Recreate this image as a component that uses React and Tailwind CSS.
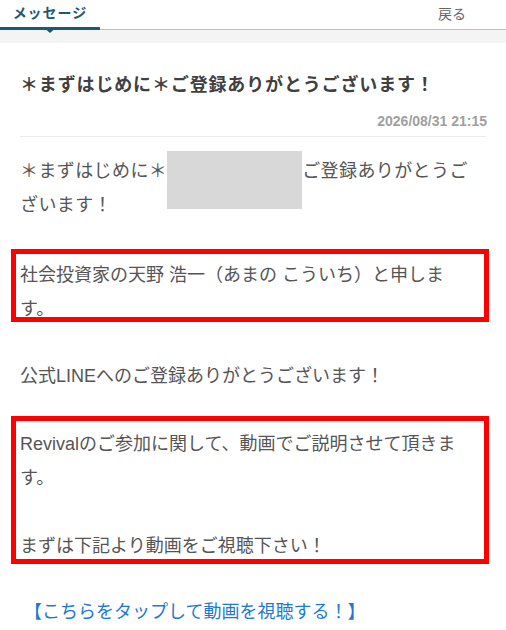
import React from 'react';

const FONT = "font-['Liberation_Sans','Noto_Sans_CJK_JP',sans-serif]";

export default function App() {
  return (
    <div className={`w-[506px] h-[630px] overflow-hidden bg-white ${FONT}`}>
      {/* Tabs */}
      <div className="flex h-[30px]">
        <div className="relative w-[100px] border-b-[3px] border-[#1b5a72] flex items-center justify-center">
          <span className="text-[14px] font-bold text-[#1b5a72] tracking-[1px]">メッセージ</span>
          <span className="absolute left-[43px] top-[27px] w-0 h-0 border-l-[7px] border-r-[7px] border-t-[6px] border-l-transparent border-r-transparent border-t-[#1b5a72]"></span>
        </div>
        <div className="flex-1 border-b border-[#bdbdbd] flex items-center justify-end pr-[40px]">
          <span className="text-[14px] text-[#666]">戻る</span>
        </div>
      </div>
      <div className="h-[13px] bg-[#f4f4f4]"></div>

      {/* Message */}
      <div className="px-[20px]">
        <h1 className="mt-[29px] text-[18px] leading-[26px] font-bold text-[#404040] tracking-[0.85px]">
          ＊まずはじめに＊ご登録ありがとうございます！
        </h1>
        <div className="mt-[13px] text-right -mr-[1px] text-[14px] leading-[20px] font-bold text-[#a0a0a0]">
          2026/08/31 21:15
        </div>
        <div className="mt-[5px] border-t border-[#ececec]"></div>

        <div className="mt-[17px] text-[18px] leading-[34px] text-[#555]">
          <p className="tracking-[0.4px]">
            ＊まずはじめに＊<span className="inline-block align-top w-[135px] h-[58px] -mt-[3px] -mb-[24px] bg-[#d8d8d8]"></span>ご登録ありがとうご
            <br />
            ざいます！
          </p>

          <div className="mt-[27px] -ml-[9px] -mr-[3px] h-[73px] overflow-hidden border-[5px] border-[#ff0000] pt-[4px] pl-[4px]">
            社会投資家の天野 浩一（あまの こういち）と申しま
            <br />
            す。
          </div>

          <p className="mt-[37px]">公式LINEへのご登録ありがとうございます！</p>

          <div className="mt-[23px] -ml-[9px] -mr-[3px] h-[148px] overflow-hidden border-[5px] border-[#ff0000] pt-[6px] pl-[4px]">
            Revivalのご参加に関して、動画でご説明させて頂きま
            <br />
            す。
            <br />
            <br />
            まずは下記より動画をご視聴下さい！
          </div>

          <p className="mt-[31px] pl-[4px]">
            <a className="text-[#1f78d1]">【こちらをタップして動画を視聴する！】</a>
          </p>
        </div>
      </div>
    </div>
  );
}
